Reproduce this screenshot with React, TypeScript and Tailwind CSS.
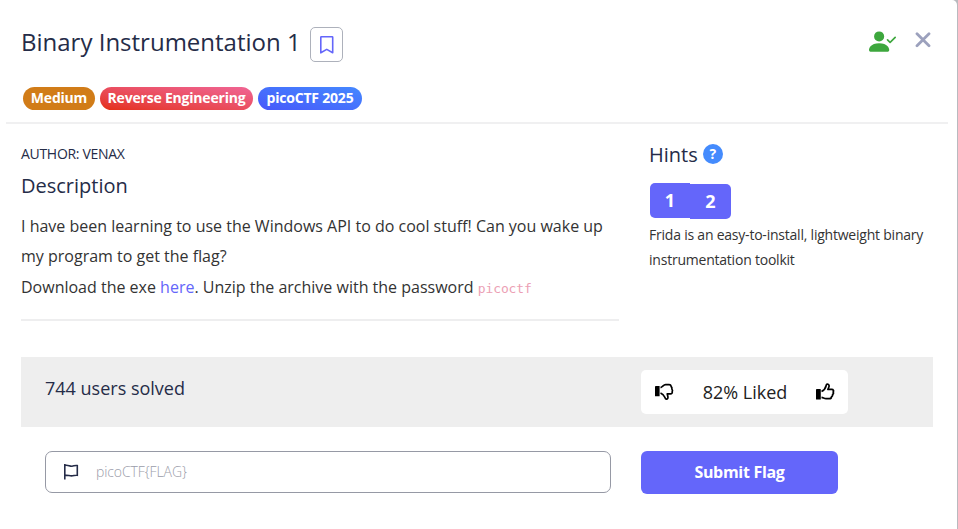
import React from "react";
import { BsPersonCheckFill } from "react-icons/bs";

function Bookmark() {
  return (
    <svg width="16" height="20" viewBox="0 0 16 20" fill="none" stroke="#6466fa" strokeWidth="1.6" strokeLinejoin="round">
      <path d="M2.300 1.800h10.900a.5.5 0 0 1 .5.5v15.500L7.750 14.400l-5.950 3.400V2.300a.5.5 0 0 1 .5-.5Z" />
    </svg>
  );
}

function ThumbUp() {
  return (
    <svg width="19" height="18" viewBox="0 0 19 18">
      <rect x="0" y="6" width="4.800" height="10.600" rx="0.4" fill="#000" />
      <path
        d="M5.500 8.400C7.800 7.300 9.600 5 10.100 2.700C10.400 1.200 11.200 .9 12 1.200C13.300 1.700 13.300 3.200 12.700 4.500L11.900 6.400H15.700C17.500 6.400 18 8 17.100 9C17.700 10 17.300 11 16.600 11.500C16.800 12.700 16.200 13.400 15.500 13.700C15.500 15.200 14.700 15.700 13.200 15.700H10C8.300 15.700 7.300 14.700 5.500 14.400"
        fill="none"
        stroke="#000"
        strokeWidth="1.7"
        strokeLinejoin="round"
      />
    </svg>
  );
}

function ThumbDown() {
  return (
    <svg width="19" height="18" viewBox="0 0 19 18">
      <rect x="0" y="3" width="4.600" height="10.300" rx="0.4" fill="#000" />
      <path
        d="M5.500 4.600C7.500 4 8.500 1.600 10.600 1.600H13.500C15.200 1.400 16 2.100 16.100 3.500C16.900 4.200 17.100 5 16.900 6C17.600 7 17.700 7.900 17.200 8.700C17.500 10 16.800 10.900 15.500 10.900H12.200L12.800 13.200C13.200 14.800 12.800 16 11.700 16.200C10.600 16.400 10.200 15.500 9.800 14.200C9.200 12.200 7.700 11 5.500 10"
        fill="none"
        stroke="#000"
        strokeWidth="1.7"
        strokeLinejoin="round"
      />
    </svg>
  );
}

function Flag() {
  return (
    <svg width="16" height="18" viewBox="0 0 16 18" fill="none" stroke="#252c48" strokeWidth="1.6">
      <path d="M1.800 1V16.600M1.800 2.600C4.500 1.500 6.500 3.400 9 3.200C11 3 12 2.200 14.300 2.600V12.300C12 12 10.800 12.900 8.500 12.900C6 12.900 4 11.800 1.800 12.600" />
    </svg>
  );
}

export default function App() {
  return (
    <div className="h-[529px] w-[958px] overflow-hidden bg-[#b9babf] font-['Open_Sans',sans-serif] text-[#252c48]">
      <main className="h-full w-[957px] rounded-tr-[5px] bg-white">
        <header className="mx-[6px] flex h-[124px] w-[942px] justify-between border-b-2 border-[#f0f0f1] pl-[15px]">
          <div>
            <div className="flex pt-[27px]">
              <h1 className="-mt-px w-[289px] whitespace-nowrap text-[24px] leading-[31px]">Binary Instrumentation 1</h1>
              <button className="flex h-[35px] w-[33px] items-center justify-center rounded-[5px] border border-[#adb1bb]">
                <Bookmark />
              </button>
            </div>
            <div className="ml-[2px] mt-[25px] flex gap-[5px] whitespace-nowrap text-[14px] font-bold leading-[22px] tracking-[-0.2px] text-white">
              <span className="h-[23px] w-[72px] rounded-full bg-[#d17c18] text-center">Medium</span>
              <span className="h-[23px] w-[153px] rounded-full bg-linear-to-tr from-[#e42d0d] to-[#f06595] text-center">Reverse Engineering</span>
              <span className="h-[23px] w-[104px] rounded-full bg-linear-to-tr from-[#4757fa] to-[#4588ff] text-center">picoCTF 2025</span>
            </div>
          </div>
          <div className="flex pr-[17px]">
            <BsPersonCheckFill className="mr-[19px] mt-[28px] size-[27px] text-[#3da73d]" />
            <svg className="mt-[32px]" width="16" height="16" viewBox="0 0 16 16" stroke="#9ca1bd" strokeWidth="2.8" strokeLinecap="round">
              <path d="M2 1.700l12 12M14 1.700L2 13.700" />
            </svg>
          </div>
        </header>

        <div className="flex h-[233px] pl-[21px]">
          <section className="h-[197px] w-[598px] border-b-2 border-[#eeeeef]">
            <div className="pt-[20px] text-[14px] leading-[20px] tracking-[-0.3px]">AUTHOR: VENAX</div>
            <h2 className="mt-[9px] text-[20px] leading-[26px]">Description</h2>
            <p className="mt-[12px] whitespace-nowrap text-[16px] leading-[30.4px] text-[#333]">
              I have been learning to use the Windows API to do cool stuff! Can you wake up
              <br />
              my program to get the flag?
              <br />
              Download the exe <a className="text-[#6466fa]">here</a>. Unzip the archive with the password{" "}
              <code className="font-['DejaVu_Sans_Mono',monospace] text-[13px] tracking-[-0.1px] text-[#ec9fb4]">picoctf</code>
            </p>
          </section>
          <aside className="ml-[30px] pt-[17px]">
            <div className="flex h-[26px] items-center">
              <h2 className="pt-[2px] text-[20px] leading-[26px]">Hints</h2>
              <span className="ml-[5px] flex size-[20px] items-center justify-center rounded-full bg-[#448bfd] text-[14px] font-bold leading-none text-white">?</span>
            </div>
            <div className="ml-[1px] mt-[16px] flex text-[18px] font-bold text-white">
              <button className="h-[35px] w-[40px] rounded-l-[5px] bg-[#6466fa]">1</button>
              <button className="mt-[1px] h-[35px] w-[41px] rounded-r-[5px] bg-[#6466fa]">2</button>
            </div>
            <p className="mt-[3px] whitespace-nowrap text-[14px] leading-[25px] tracking-[-0.22px] text-[#333]">
              Frida is an easy-to-install, lightweight binary
              <br />
              instrumentation toolkit
            </p>
          </aside>
        </div>

        <section className="ml-[21px] flex h-[70px] w-[912px] bg-[#eeeeee] pl-[24px]">
          <div className="w-[596px] pt-[18px] text-[18px] leading-[27px]">744 users solved</div>
          <div className="mt-[13px] flex h-[44px] w-[207px] items-center justify-between rounded-[5px] bg-white pl-[14px] pr-[13px] text-[18px] text-[#222]">
            <ThumbDown />
            <span>82% Liked</span>
            <ThumbUp />
          </div>
        </section>

        <form className="ml-[45px] mt-[24px] flex">
          <div className="flex h-[42px] w-[566px] items-center rounded-[7px] border border-[#9699a5] pl-[17px]">
            <Flag />
            <span className="-mt-[2px] ml-[17px] text-[14px] font-light tracking-[-0.1px] text-[#9a9ca9]">picoCTF&#123;FLAG&#125;</span>
          </div>
          <button type="button" className="ml-[30px] h-[43px] w-[197px] rounded-[6px] bg-[#6466fa] pb-[2px] text-[16px] font-bold tracking-[-0.3px] text-white">
            Submit Flag
          </button>
        </form>
      </main>
    </div>
  );
}
